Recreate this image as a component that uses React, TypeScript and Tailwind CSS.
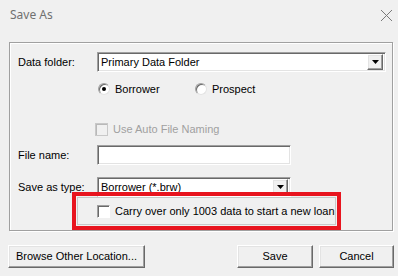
import React from "react";

const sunken =
  "border border-t-[#a0a0a0] border-l-[#a0a0a0] border-b-white border-r-white shadow-[inset_1px_1px_0_#696969,inset_-1px_-1px_0_#e3e3e3]";
const raised =
  "border border-t-white border-l-white border-b-[#696969] border-r-[#696969] shadow-[inset_-1px_-1px_0_#a0a0a0,inset_1px_1px_0_#e3e3e3]";

function DropButton() {
  return (
    <div className={`flex h-[16px] w-[16px] items-center justify-center bg-[#f0f0f0] ${raised}`}>
      <svg width="7" height="4" viewBox="0 0 7 4">
        <path d="M0 0h7L3.5 4z" fill="#000" />
      </svg>
    </div>
  );
}

function Select({ value, width }: { value: string; width: string }) {
  return (
    <div className={`flex h-[20px] items-center justify-between bg-white pl-[3px] pr-[2px] ${width} ${sunken}`}>
      <span>{value}</span>
      <DropButton />
    </div>
  );
}

function Radio({ checked, label }: { checked?: boolean; label: string }) {
  return (
    <div className="flex items-center gap-[5px]">
      <div className="flex h-[12px] w-[12px] items-center justify-center rounded-full border border-t-[#a0a0a0] border-l-[#a0a0a0] border-b-[#e3e3e3] border-r-[#e3e3e3] bg-white shadow-[inset_1px_1px_0_#696969]">
        {checked && <div className="h-[4px] w-[4px] rounded-full bg-black" />}
      </div>
      <span>{label}</span>
    </div>
  );
}

function Check({ label, disabled }: { label: string; disabled?: boolean }) {
  return (
    <div className="flex items-center gap-[5px]">
      <div
        className={`h-[13px] w-[13px] border ${
          disabled
            ? "border-[#c8c8c8] bg-[#f0f0f0] shadow-[inset_1px_1px_0_#b8b8b8]"
            : "border-t-[#a0a0a0] border-l-[#a0a0a0] border-b-white border-r-white bg-white shadow-[inset_1px_1px_0_#696969]"
        }`}
      />
      <span className={disabled ? "text-[#a0a0a0]" : "text-black"}>{label}</span>
    </div>
  );
}

function Button({ label, width }: { label: string; width: string }) {
  return (
    <div className={`flex h-[23px] items-center justify-center bg-[#f0f0f0] ${width} ${raised}`}>
      {label}
    </div>
  );
}

export default function App() {
  return (
    <div className="h-[276px] w-[398px] overflow-hidden bg-[#f0f0f0] text-[11px] leading-none text-black [font-family:'Liberation_Sans',Arial,sans-serif]">
      <div className="flex h-[30px] items-center justify-between pl-[10px] pr-[5px]">
        <span className="text-[12px] text-[#707070] [font-family:'Noto_Sans',sans-serif]">Save As</span>
        <svg width="13" height="13" viewBox="0 0 13 13">
          <path d="M1 1l11 11M12 1L1 12" stroke="#7a7a7a" strokeWidth="1" />
        </svg>
      </div>

      <div className="relative ml-[9px] mt-[12px] h-[189px] w-[384px] border border-[#a0a0a0] pl-[8px] pt-[9px] shadow-[inset_1px_1px_0_#fff,1px_1px_0_#fff]">
        <div className="flex h-[20px] items-center">
          <span className="w-[79px]">Data folder:</span>
          <Select value="Primary Data Folder" width="w-[289px]" />
        </div>

        <div className="mt-[9px] flex h-[16px] items-center pl-[80px]">
          <div className="w-[97px]">
            <Radio checked label="Borrower" />
          </div>
          <Radio label="Prospect" />
        </div>

        <div className="mt-[24px] flex h-[16px] items-center pl-[77px]">
          <Check disabled label="Use Auto File Naming" />
        </div>

        <div className="mt-[8px] flex h-[20px] items-center">
          <span className="w-[79px]">File name:</span>
          <div className={`h-[20px] w-[194px] bg-white ${sunken}`} />
        </div>

        <div className="mt-[12px] flex h-[20px] items-center">
          <span className="w-[79px]">Save as type:</span>
          <Select value="Borrower (*.brw)" width="w-[194px]" />
        </div>

        <div className="absolute left-[62px] top-[149px] h-[38px] w-[269px] border-[4px] border-[#e8141e] p-[1px]">
          <div className="flex h-full w-full items-center border border-[#c8c8c8] pl-[19px]">
            <Check label="Carry over only 1003 data to start a new loan" />
          </div>
        </div>
      </div>

      <div className="mt-[14px] flex items-center pl-[8px]">
        <Button label="Browse Other Location..." width="w-[137px]" />
        <div className="ml-[92px]">
          <Button label="Save" width="w-[76px]" />
        </div>
        <div className="ml-[6px]">
          <Button label="Cancel" width="w-[75px]" />
        </div>
      </div>
    </div>
  );
}
